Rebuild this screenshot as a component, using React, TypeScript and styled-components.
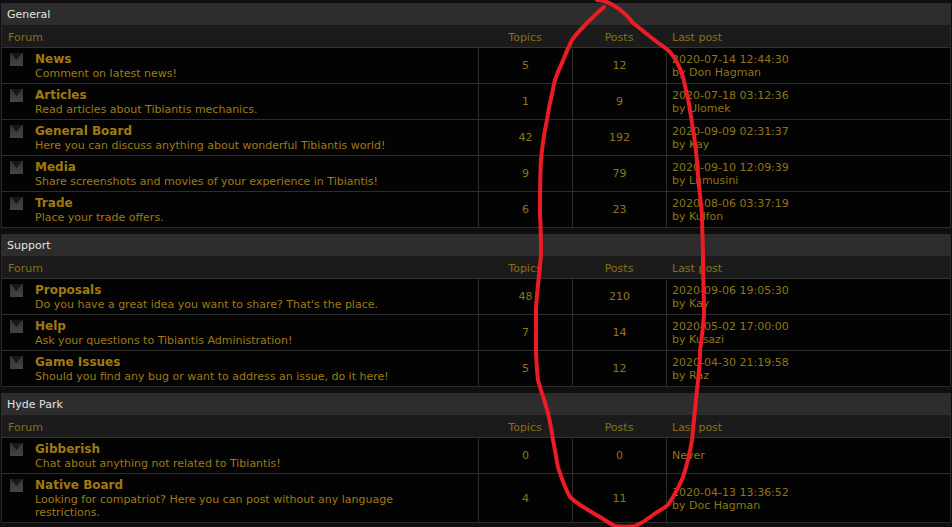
import React from "react";
import styled, { createGlobalStyle } from "styled-components";

type Forum = {
  name: string;
  desc: string;
  topics: number;
  posts: number;
  date?: string;
  by?: string;
  tall?: boolean;
};

type Section = { title: string; forums: Forum[] };

const sections: Section[] = [
  {
    title: "General",
    forums: [
      { name: "News", desc: "Comment on latest news!", topics: 5, posts: 12, date: "2020-07-14 12:44:30", by: "Don Hagman" },
      { name: "Articles", desc: "Read articles about Tibiantis mechanics.", topics: 1, posts: 9, date: "2020-07-18 03:12:36", by: "Ulomek" },
      { name: "General Board", desc: "Here you can discuss anything about wonderful Tibiantis world!", topics: 42, posts: 192, date: "2020-09-09 02:31:37", by: "Kay" },
      { name: "Media", desc: "Share screenshots and movies of your experience in Tibiantis!", topics: 9, posts: 79, date: "2020-09-10 12:09:39", by: "Lumusini" },
      { name: "Trade", desc: "Place your trade offers.", topics: 6, posts: 23, date: "2020-08-06 03:37:19", by: "Kulfon" },
    ],
  },
  {
    title: "Support",
    forums: [
      { name: "Proposals", desc: "Do you have a great idea you want to share? That's the place.", topics: 48, posts: 210, date: "2020-09-06 19:05:30", by: "Kay" },
      { name: "Help", desc: "Ask your questions to Tibiantis Administration!", topics: 7, posts: 14, date: "2020-05-02 17:00:00", by: "Kusazi" },
      { name: "Game Issues", desc: "Should you find any bug or want to address an issue, do it here!", topics: 5, posts: 12, date: "2020-04-30 21:19:58", by: "Raz" },
    ],
  },
  {
    title: "Hyde Park",
    forums: [
      { name: "Gibberish", desc: "Chat about anything not related to Tibiantis!", topics: 0, posts: 0 },
      { name: "Native Board", desc: "Looking for compatriot? Here you can post without any language restrictions.", topics: 4, posts: 11, date: "2020-04-13 13:36:52", by: "Doc Hagman", tall: true },
    ],
  },
];

const GlobalStyle = createGlobalStyle`
  html, body {
    margin: 0;
    padding: 0;
    background: #0f0f0f;
    overflow: hidden;
  }
  body {
    font-family: "DejaVu Sans", Verdana, sans-serif;
    font-size: 11px;
  }
`;

const Page = styled.div`
  position: relative;
  width: 952px;
  height: 527px;
  box-sizing: border-box;
  padding: 3px 1px 0 1px;
  display: flex;
  flex-direction: column;
  gap: 6px;
  overflow: hidden;
`;

const Category = styled.section`
  width: 950px;
  box-sizing: border-box;
  border-left: 1px solid #2a2a2a;
  border-right: 1px solid #2a2a2a;
`;

const CategoryTitle = styled.div`
  height: 22px;
  line-height: 24px;
  padding-left: 6px;
  margin-left: -1px;
  margin-right: -1px;
  background: #2d2d2d;
  color: #e4e4e4;
`;

const Columns = styled.div`
  display: grid;
  grid-template-columns: 477px 94px 94px 1fr;
  height: 22px;
  line-height: 25px;
  background: #1b1b1b;
  border-bottom: 1px solid #333;
  color: #857014;
`;

const ColumnLabel = styled.div<{ $center?: boolean }>`
  text-align: ${(p) => (p.$center ? "center" : "left")};
  padding-left: ${(p) => (p.$center ? "0" : "6px")};
  padding-right: ${(p) => (p.$center ? "2px" : "0")};
`;

const LastPostLabel = styled(ColumnLabel)`
  padding-left: 5px;
`;

const Row = styled.div<{ $tall?: boolean }>`
  display: grid;
  grid-template-columns: 477px 94px 94px 1fr;
  height: ${(p) => (p.$tall ? "48px" : "35px")};
  background: #030303;
  border-bottom: 1px solid #2c2c2c;
`;

const ForumCell = styled.div`
  display: flex;
  padding: 4px 0 0 8px;
  border-right: 1px solid #2c2c2c;
  box-sizing: border-box;
`;

const ForumIcon = styled.svg`
  flex: none;
  width: 13px;
  height: 13px;
  margin-right: 12px;
  margin-top: 1px;
`;

const ForumText = styled.div`
  flex: 1;
  min-width: 0;
  padding-right: 70px;
`;

const ForumName = styled.div`
  color: #a07a10;
  font-size: 12px;
  font-weight: bold;
  line-height: 14px;
`;

const ForumDesc = styled.div`
  color: #a07a10;
  line-height: 13px;
  margin-top: 1px;
`;

const CountCell = styled.div`
  display: flex;
  align-items: center;
  justify-content: center;
  color: #907516;
  border-right: 1px solid #2c2c2c;
  box-sizing: border-box;
`;

const LastPost = styled.div<{ $tall?: boolean }>`
  display: flex;
  flex-direction: column;
  justify-content: center;
  padding: ${(p) => (p.$tall ? "2px" : "0")} 0 0 5px;
  color: #907516;
  line-height: 13px;
`;

const Scribble = styled.svg`
  position: absolute;
  left: 0;
  top: 0;
  pointer-events: none;
`;

function Envelope() {
  return (
    <ForumIcon viewBox="0 0 13 13">
      <defs>
        <linearGradient id="env" x1="0" y1="0" x2="0" y2="1">
          <stop offset="0" stopColor="#333" />
          <stop offset="1" stopColor="#444" />
        </linearGradient>
      </defs>
      <rect width="13" height="13" fill="url(#env)" />
      <path d="M1 0h11L6.5 7z" fill="#181818" />
    </ForumIcon>
  );
}

const redLine =
  "M604 7 C598 12 593 17 588 22 C582 28 576 34 572 40 C568 48 565 55 562 63 C559 69 557 74 555 80 C553 88 552 95 550 103 C548 112 547 121 545 130 C543 140 542 150 541 160 C540 175 540 195 540 215 C541 230 541 245 541 255 C540 265 539 275 538 285 C537 295 536 303 536 312 C536 325 536 340 536 350 C536 360 537 370 538 380 C541 391 545 402 548 413 C550 422 552 431 553 440 C555 449 556 458 558 467 C561 477 565 488 570 497 C578 505 590 511 600 517 C605 520 610 524 615 526 C622 527 628 527 635 526 C642 523 648 519 653 515 C658 511 663 509 668 505 C674 496 679 487 683 477 C687 465 690 452 692 440 C693 430 694 420 695 410 C696 397 698 383 699 370 C700 364 700 357 700 350 C702 338 703 326 704 315 C704 296 703 277 703 258 C703 244 702 229 702 215 C701 202 699 188 698 175 C697 158 695 140 692 123 C690 107 687 92 683 77 C680 67 676 59 670 52 C666 48 661 45 657 42 C649 36 641 29 633 23 C627 15 620 9 613 5 C608 2 602 0 597 0";

export default function App() {
  return (
    <>
      <GlobalStyle />
      <Page>
        {sections.map((section) => (
          <Category key={section.title}>
            <CategoryTitle>{section.title}</CategoryTitle>
            <Columns>
              <ColumnLabel>Forum</ColumnLabel>
              <ColumnLabel $center>Topics</ColumnLabel>
              <ColumnLabel $center>Posts</ColumnLabel>
              <LastPostLabel>Last post</LastPostLabel>
            </Columns>
            {section.forums.map((forum) => (
              <Row key={forum.name} $tall={forum.tall}>
                <ForumCell>
                  <Envelope />
                  <ForumText>
                    <ForumName>{forum.name}</ForumName>
                    <ForumDesc>{forum.desc}</ForumDesc>
                  </ForumText>
                </ForumCell>
                <CountCell>{forum.topics}</CountCell>
                <CountCell>{forum.posts}</CountCell>
                <LastPost $tall={forum.tall}>
                  {forum.date ? (
                    <>
                      <div>{forum.date}</div>
                      <div>by {forum.by}</div>
                    </>
                  ) : (
                    <div>Never</div>
                  )}
                </LastPost>
              </Row>
            ))}
          </Category>
        ))}
        <Scribble width="952" height="527" viewBox="0 0 952 527">
          <path d={redLine} fill="none" stroke="#ed1c24" strokeWidth="4" strokeLinecap="round" strokeLinejoin="round" />
        </Scribble>
      </Page>
    </>
  );
}
